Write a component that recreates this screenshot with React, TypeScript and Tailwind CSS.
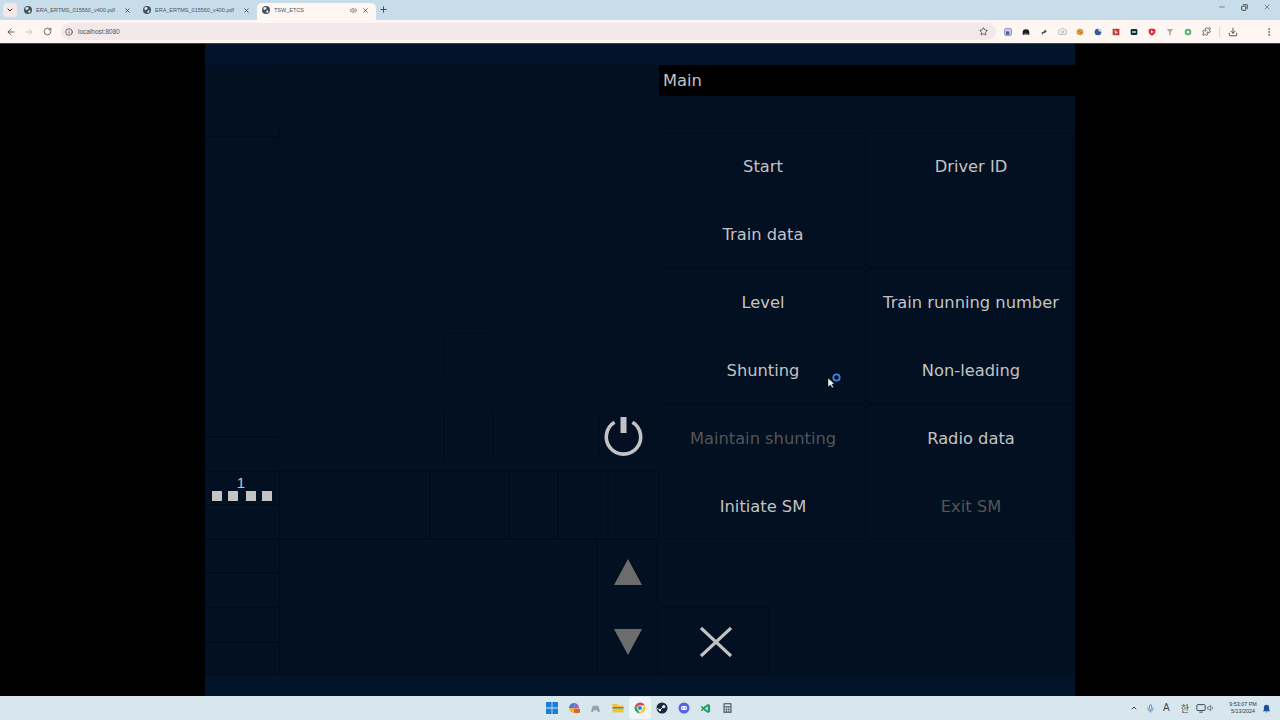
import {
  ArrowLeft,
  ArrowRight,
  Camera,
  ChevronDown,
  ChevronUp,
  Download,
  Info,
  Mic,
  Minus,
  MoreVertical,
  Plus,
  Puzzle,
  RotateCw,
  Star,
  Volume1,
  Volume2,
  X,
} from 'lucide-react';
import clsx from 'clsx';

const CELL = 'border border-[#010b1a] shadow-[inset_0_0_0_1px_#03112a]';

// ─── browser chrome ────────────────────────────────────────────────

function Globe() {
  return (
    <svg viewBox="0 0 16 16" className="h-[8px] w-[8px] shrink-0">
      <circle cx="8" cy="8" r="8" fill="#44515c" />
      <path d="M3 3 L8 2 L9 5 L6 8 L3 7 Z M9 9 L13 9 L12 13 L9 14 Z" fill="#eef2f4" />
    </svg>
  );
}

function Tab({ title, active }: { title: string; active?: boolean }) {
  return (
    <div
      className={clsx(
        'flex h-[17px] w-[119px] items-center rounded-t-[5px] pb-[3px] pl-[5px] pr-[7px]',
        active && 'bg-[#fdf6f3]',
      )}
    >
      <Globe />
      <span className="ml-[4px] flex-1 truncate text-[5.5px] text-[#4c5358]">{title}</span>
      {active && <Volume2 size={7} className="mr-[5px] text-[#444]" />}
      <X size={7} strokeWidth={2.5} className="text-[#333]" />
    </div>
  );
}

function TabStrip() {
  return (
    <div className="flex h-[20px] items-end bg-[#c7deea] pl-[3px]">
      <div className="mb-[3px] mr-[2px] flex h-[14px] w-[14px] items-center justify-center rounded-[4px] bg-[#f4e8e6]">
        <ChevronDown size={8} strokeWidth={3} className="text-[#333]" />
      </div>
      <Tab title="ERA_ERTMS_015560_v400.pdf" />
      <Tab title="ERA_ERTMS_015560_v400.pdf" />
      <Tab title="TSW_ETCS" active />
      <Plus size={9} strokeWidth={2.5} className="mb-[6px] ml-[3px] text-[#444]" />
      <div className="mb-[9px] ml-auto flex items-center gap-[15px] pr-[9px] text-[#555]">
        <Minus size={8} />
        <svg viewBox="0 0 10 10" className="h-[7px] w-[7px]">
          <rect x="1" y="3" width="6" height="6" rx="1" fill="none" stroke="#444" strokeWidth="1.4" />
          <path d="M3 1 H9 V7" fill="none" stroke="#444" strokeWidth="1.2" />
        </svg>
        <X size={8} />
      </div>
    </div>
  );
}

function ExtensionIcons() {
  return (
    <div className="ml-[3px] flex items-center">
      <Ext>
        <rect x="1" y="1" width="10" height="10" rx="1.5" fill="#d6daf0" stroke="#4c5aa0" />
        <rect x="3" y="5" width="5" height="5" fill="#4c5aa0" />
      </Ext>
      <Ext>
        <path d="M1 7 A5 5 0 0 1 11 7 V10 H8 V8 H7 V10 H5 V8 H4 V10 H1 Z" fill="#1b1b1f" />
      </Ext>
      <Ext>
        <path d="M1 8 L6 5 L8 2 L9 5 L11 4 L8 7 L5 8 L4 11 L3 8 Z" fill="#4a5040" />
      </Ext>
      <div className="flex w-[18px] justify-center">
        <Camera size={9} className="text-[#a4a6a8]" />
      </div>
      <Ext>
        <circle cx="6" cy="6" r="5" fill="#d99b36" />
        <circle cx="4.5" cy="5" r="1" fill="#9c6a1c" />
        <circle cx="7.5" cy="7" r="1" fill="#9c6a1c" />
      </Ext>
      <Ext>
        <circle cx="6" cy="6" r="5" fill="#2f5a9c" />
        <path d="M6 1 A5 5 0 0 1 11 6 L7 5 Z" fill="#c9d8ec" />
      </Ext>
      <Ext>
        <rect x="1" y="1" width="10" height="10" rx="1" fill="#c2413c" />
        <path d="M4 3 L9 7 L6 7.5 L5 10 Z" fill="#f6dada" />
      </Ext>
      <Ext>
        <rect x="1" y="1.5" width="10" height="9" rx="2" fill="#10303c" />
        <rect x="3" y="5" width="6" height="2" fill="#dfe8ea" />
      </Ext>
      <Ext>
        <path d="M1 2 L6 0.8 L11 2 V6 C11 9 8 10.5 6 11.5 C4 10.5 1 9 1 6 Z" fill="#dd2b3c" />
        <path d="M4.5 3.5 L8.5 6 L4.5 8 Z" fill="#fff" />
      </Ext>
      <Ext>
        <path d="M1 1.5 H11 L7.2 6 V11 H4.8 V6 Z" fill="#a9aca4" />
      </Ext>
      <Ext>
        <circle cx="6" cy="6" r="5" fill="#57b06a" />
        <circle cx="6" cy="6" r="2.4" fill="#d8efdc" />
      </Ext>
      <div className="flex w-[18px] justify-center">
        <Puzzle size={9} className="text-[#333]" />
      </div>
    </div>
  );
}

function Ext({ children }: { children: React.ReactNode }) {
  return (
    <div className="flex w-[18px] justify-center">
      <svg viewBox="0 0 12 12" className="h-[8px] w-[8px]">
        {children}
      </svg>
    </div>
  );
}

function Toolbar() {
  return (
    <div className="flex h-[23px] items-center bg-[#fdf6f3] pl-[6px]">
      <ArrowLeft size={10} className="text-[#444]" />
      <ArrowRight size={10} className="ml-[8px] text-[#b9b5b5]" />
      <RotateCw size={9} className="ml-[9px] text-[#444]" />
      <div className="ml-[9px] flex h-[17px] w-[935px] items-center rounded-full bg-[#f3e8ea] pl-[4px] pr-[8px]">
        <Info size={8} className="text-[#333]" />
        <span className="ml-[5px] text-[6.5px] text-[#555]">localhost:8080</span>
        <Star size={9} className="ml-auto text-[#333]" />
      </div>
      <ExtensionIcons />
      <div className="ml-[4px] h-[10px] w-px bg-[#ddd5d2]" />
      <Download size={10} className="ml-[8px] text-[#333]" />
      <MoreVertical size={10} className="ml-[26px] text-[#555]" />
    </div>
  );
}

// ─── taskbar ───────────────────────────────────────────────────────

function TaskIcon({ children, active }: { children: React.ReactNode; active?: boolean }) {
  return (
    <div
      className={clsx(
        'flex h-[22px] w-[22px] items-center justify-center rounded-[3px]',
        active && 'bg-[#eef4f8]',
      )}
    >
      {children}
    </div>
  );
}

function Taskbar() {
  return (
    <div className="relative flex h-[24px] items-center justify-center bg-[#d8e6ee]">
      <div className="ml-[-1px] flex items-center">
        <TaskIcon>
          <svg viewBox="0 0 12 12" className="h-[12px] w-[12px]">
            <path d="M0 0H5.6V5.6H0ZM6.4 0H12V5.6H6.4ZM0 6.4H5.6V12H0ZM6.4 6.4H12V12H6.4Z" fill="#1b7fd6" />
          </svg>
        </TaskIcon>
        <TaskIcon>
          <svg viewBox="0 0 12 12" className="h-[12px] w-[12px]">
            <path d="M1 6 A5 5 0 0 1 6 1 L7 6 Z" fill="#3f7fe0" />
            <path d="M6 1 A5 5 0 0 1 11 6 L7 6 Z" fill="#9a5fd0" />
            <path d="M1 6 H7 L6 11 A5 5 0 0 1 1 6 Z" fill="#f0b040" />
            <rect x="6" y="6.5" width="6" height="4.5" rx="1" fill="#d8652e" />
          </svg>
        </TaskIcon>
        <TaskIcon>
          <svg viewBox="0 0 12 12" className="h-[11px] w-[11px]">
            <path d="M3 3 H9 L11 9 L9 10 L7.5 8 H4.5 L3 10 L1 9 Z" fill="#98a4ac" />
          </svg>
        </TaskIcon>
        <TaskIcon>
          <svg viewBox="0 0 12 12" className="h-[12px] w-[12px]">
            <path d="M0.5 2 H5 L6 3.5 H11.5 V10.5 H0.5 Z" fill="#f4c430" />
            <rect x="0.5" y="5" width="11" height="1.5" fill="#2f8fd6" />
          </svg>
        </TaskIcon>
        <TaskIcon active>
          <svg viewBox="0 0 12 12" className="h-[12px] w-[12px]">
            <path d="M6 0.5 A5.5 5.5 0 0 1 10.8 3.5 H6 Z" fill="#e0463a" />
            <path d="M1.4 3 A5.5 5.5 0 0 1 6 0.5 V3.5 L4 7 Z" fill="#e0463a" />
            <path d="M1.4 3 L4 7.5 L6 11.5 A5.5 5.5 0 0 1 1.4 3 Z" fill="#3da854" />
            <path d="M10.8 3.5 A5.5 5.5 0 0 1 6 11.5 L8 7 Z" fill="#f4c430" />
            <circle cx="6" cy="6" r="2.4" fill="#2f78d6" stroke="#fff" strokeWidth="0.8" />
          </svg>
        </TaskIcon>
        <TaskIcon>
          <svg viewBox="0 0 12 12" className="h-[12px] w-[12px]">
            <circle cx="6" cy="6" r="5.5" fill="#16283e" />
            <circle cx="7.8" cy="4.6" r="1.6" fill="#e6edf2" />
            <circle cx="4" cy="8" r="1.2" fill="#e6edf2" />
            <path d="M1 6.5 L4 8 L7 5" stroke="#e6edf2" strokeWidth="0.9" fill="none" />
          </svg>
        </TaskIcon>
        <TaskIcon>
          <svg viewBox="0 0 12 12" className="h-[12px] w-[12px]">
            <circle cx="6" cy="6" r="5.5" fill="#5662e8" />
            <rect x="3" y="4" width="6" height="4" rx="1.6" fill="#fff" />
            <circle cx="4.6" cy="6" r="0.7" fill="#5662e8" />
            <circle cx="7.4" cy="6" r="0.7" fill="#5662e8" />
          </svg>
        </TaskIcon>
        <TaskIcon>
          <svg viewBox="0 0 12 12" className="h-[11px] w-[11px]">
            <path d="M8.5 1 L11 2.2 V9.8 L8.5 11 L3.5 7.4 L1.6 9 L0.7 8.2 L2.6 6 L0.7 3.8 L1.6 3 L3.5 4.6 Z M8.5 3.6 L5.2 6 L8.5 8.4 Z" fill="#1f9e6a" />
          </svg>
        </TaskIcon>
        <TaskIcon>
          <svg viewBox="0 0 12 12" className="h-[12px] w-[11px]">
            <rect x="1.5" y="0.5" width="9" height="11" rx="1" fill="#5f6f7c" />
            <rect x="3" y="2" width="6" height="2" fill="#d8e6ee" />
            <path d="M3 5.5H4.5V7H3ZM5.3 5.5H6.8V7H5.3ZM7.5 5.5H9V7H7.5ZM3 8H4.5V9.5H3ZM5.3 8H6.8V9.5H5.3ZM7.5 8H9V9.5H7.5Z" fill="#d8e6ee" />
          </svg>
        </TaskIcon>
      </div>
      <div className="absolute right-0 top-0 flex h-[24px] items-center text-[#3c4a56]">
        <ChevronUp size={8} strokeWidth={3} />
        <Mic size={9} className="ml-[8px] text-[#4a7fb0]" />
        <span className="ml-[8px] text-[10px] leading-none">A</span>
        <span className="ml-[11px] font-['Noto_Sans_CJK_KR',sans-serif] text-[9px] leading-none">한</span>
        <svg viewBox="0 0 12 12" className="ml-[7px] h-[10px] w-[10px]">
          <rect x="1" y="2" width="10" height="7" rx="1" fill="none" stroke="#3c4a56" strokeWidth="1.2" />
          <path d="M4 11 H8" stroke="#3c4a56" strokeWidth="1.2" />
        </svg>
        <Volume1 size={8} className="ml-[1px]" />
        <div className="ml-[9px] flex w-[38px] flex-col items-center text-[5.4px] leading-[7px] text-[#2e3a44]">
          <span>9:53:07 PM</span>
          <span>5/13/2024</span>
        </div>
        <svg viewBox="0 0 12 12" className="mr-[9px] h-[9px] w-[9px]">
          <path d="M6 1 A3.5 3.5 0 0 1 9.5 4.5 V8 L11 9.5 H1 L2.5 8 V4.5 A3.5 3.5 0 0 1 6 1 Z M4.8 10.2 H7.2 L6 11.6 Z" fill="#1c4f9c" />
        </svg>
      </div>
    </div>
  );
}

// ─── ETCS DMI ──────────────────────────────────────────────────────

const LEFT_ROWS = ['h-[72px]', 'h-[300px]', 'h-[34px]'];
const LEFT_ROWS_BOTTOM = ['h-[34px]', 'h-[34px]', 'h-[34px]', 'h-[35px]', 'h-[33px]'];

function LevelSymbol() {
  return (
    <div className={clsx('flex h-[34px] flex-col items-center justify-end pb-[3px]', CELL)}>
      <span className="mb-[1px] ml-[-2px] font-['Liberation_Sans',Arial,sans-serif] text-[15px] leading-[14px] text-[#c3c3c3]">
        1
      </span>
      <div className="ml-[-1px] flex">
        <span className="h-[10px] w-[10px] bg-[#c3c3c3]" />
        <span className="ml-[6px] h-[10px] w-[10px] bg-[#c3c3c3]" />
        <span className="ml-[8px] h-[10px] w-[10px] bg-[#c3c3c3]" />
        <span className="ml-[6px] h-[10px] w-[10px] bg-[#c3c3c3]" />
      </div>
    </div>
  );
}

function LeftColumn() {
  return (
    <div className="flex w-[74px] shrink-0 flex-col">
      {LEFT_ROWS.map((h) => (
        <div key={h} className={clsx(h, CELL)} />
      ))}
      <LevelSymbol />
      {LEFT_ROWS_BOTTOM.map((h, i) => (
        <div key={i} className={clsx(h, CELL)} />
      ))}
    </div>
  );
}

function PowerIcon() {
  return (
    <svg viewBox="0 0 48 48" className="h-[48px] w-[48px] shrink-0">
      <path d="M15.5 10.3 A17.2 17.2 0 1 0 33.5 10.3" fill="none" stroke="#c3c3c3" strokeWidth="3.6" />
      <rect x="21.5" y="5" width="6" height="16" fill="#c3c3c3" />
    </svg>
  );
}

function ArrowButton({ down }: { down?: boolean }) {
  return (
    <div className={clsx('flex h-[66px] items-center justify-center', CELL)}>
      <svg viewBox="0 0 28 26" className="ml-[1px] h-[26px] w-[28px]">
        <path d={down ? 'M0 0 H28 L14 26 Z' : 'M14 0 L28 26 H0 Z'} fill="#6c6c6c" />
      </svg>
    </div>
  );
}

function CenterColumn() {
  return (
    <div className="flex w-[380px] shrink-0 flex-col">
      <div className="h-[346px] pl-[165px] pt-[268px]">
        <div className={clsx('h-[48px] w-[47px]', CELL)} />
      </div>
      <div className="flex h-[60px] pl-[11px]">
        <div className={clsx('h-[49px] w-[48px]', CELL)} />
        <div className="ml-[57px] flex">
          <div className={clsx('h-[49px] w-[49px]', CELL)} />
          <div className={clsx('h-[49px] w-[49px]', CELL)} />
          <div className={clsx('h-[49px] w-[49px]', CELL)} />
        </div>
        <div className={clsx('ml-[57px] flex h-[49px] w-[48px] items-center justify-center', CELL)}>
          <PowerIcon />
        </div>
      </div>
      <div className="flex h-[68px]">
        <div className={clsx('w-[151px]', CELL)} />
        <div className={clsx('w-[79px]', CELL)} />
        <div className={clsx('w-[49px]', CELL)} />
        <div className={clsx('w-[50px]', CELL)} />
        <div className={clsx('w-[51px]', CELL)} />
      </div>
      <div className="flex h-[136px]">
        <div className={clsx('w-[318px]', CELL)} />
        <div className="flex w-[60px] flex-col gap-[4px]">
          <ArrowButton />
          <ArrowButton down />
        </div>
      </div>
    </div>
  );
}

const MENU: { label?: string; disabled?: boolean }[] = [
  { label: 'Start' },
  { label: 'Driver ID' },
  { label: 'Train data' },
  {},
  { label: 'Level' },
  { label: 'Train running number' },
  { label: 'Shunting' },
  { label: 'Non-leading' },
  { label: 'Maintain shunting', disabled: true },
  { label: 'Radio data' },
  { label: 'Initiate SM' },
  { label: 'Exit SM', disabled: true },
];

function MenuPanel() {
  return (
    <div className="flex w-[416px] shrink-0 flex-col">
      <div className="flex h-[31px] items-center bg-black pl-[4px] pt-[2px] text-[16.3px] text-[#c3c3c3]">Main</div>
      <div className="h-[37px]" />
      <div className="grid w-[414px] grid-cols-[206px_206px] grid-rows-[repeat(6,66px)] gap-[2px]">
        {MENU.map((item, i) => (
          <div
            key={i}
            className={clsx(
              'flex items-center justify-center pl-[2px] pt-[2px] text-[16.3px]',
              CELL,
              item.disabled ? 'text-[#555555]' : 'text-[#c3c3c3]',
            )}
          >
            {item.label}
          </div>
        ))}
      </div>
      <div className="pt-[68px]">
        <div className={clsx('flex h-[68px] w-[110px] items-center justify-center pl-[3px] pt-[2px]', CELL)}>
          <svg viewBox="0 0 32 30" className="h-[30px] w-[32px]">
            <path d="M1 1 L31 29 M31 1 L1 29" stroke="#c3c3c3" strokeWidth="3.2" fill="none" />
          </svg>
        </div>
      </div>
    </div>
  );
}

function BusyCursor() {
  return (
    <div className="absolute left-[622px] top-[329px]">
      <svg viewBox="0 0 16 16" className="h-[16px] w-[16px]">
        <path d="M1 5 L1 14 L3.4 12 L5.2 15 L6.5 14 L4.9 11.2 L7.5 10.8 Z" fill="#f2f2f2" stroke="#111" strokeWidth="0.5" />
        <circle cx="9.5" cy="4.5" r="3.2" fill="none" stroke="#3f86d8" strokeWidth="1.8" />
      </svg>
    </div>
  );
}

export default function App() {
  return (
    <div className="flex h-screen w-[1280px] flex-col overflow-hidden bg-black font-['Liberation_Sans',Arial,sans-serif]">
      <TabStrip />
      <Toolbar />
      <div className="h-px bg-[#3b3f44]" />
      <div className="flex h-[652px] justify-center bg-black">
        <div className="relative flex w-[870px] flex-col bg-[#021022] font-['DejaVu_Sans',Verdana,sans-serif]">
          <div className="h-[21px] bg-[#03132a]" />
          <div className="flex h-[610px]">
            <LeftColumn />
            <CenterColumn />
            <MenuPanel />
          </div>
          <div className="h-[21px] bg-[#03132a]" />
          <BusyCursor />
        </div>
      </div>
      <Taskbar />
    </div>
  );
}
